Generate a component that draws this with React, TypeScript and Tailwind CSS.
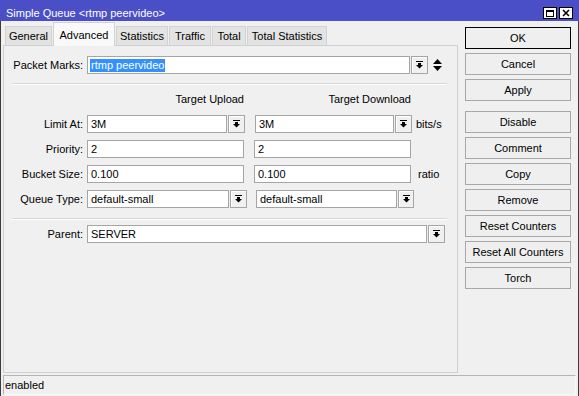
import React from "react";

const font = "font-['Liberation_Sans',Arial,sans-serif]";

function DropArrow() {
  return (
    <svg width="7" height="8" viewBox="0 0 7 8" className="block">
      <rect x="0" y="0" width="7" height="1" fill="#000" />
      <rect x="2" y="2" width="3" height="2" fill="#000" />
      <polygon points="0,4 7,4 3.5,7.5" fill="#000" />
    </svg>
  );
}

function DropButton({ w = "w-[17px]" }: { w?: string }) {
  return (
    <div
      className={`${w} h-[18px] shrink-0 border border-[#a5a5a5] bg-[#f0f0f0] shadow-[inset_1px_1px_0_#fff] flex items-center justify-center`}
    >
      <DropArrow />
    </div>
  );
}

function Field({ w, value, selected }: { w: string; value: string; selected?: boolean }) {
  return (
    <div className={`${w} h-[18px] shrink-0 border border-[#a5a5a5] bg-white flex items-center pl-[2px] overflow-hidden`}>
      {selected ? (
        <span className="bg-[#3390ff] text-white leading-[13px] px-px">{value}</span>
      ) : (
        <span className="pl-px leading-[13px]">{value}</span>
      )}
    </div>
  );
}

function Label({ children }: { children: React.ReactNode }) {
  return <div className="w-[79px] mr-[4px] shrink-0 text-right">{children}</div>;
}

const tabs = [
  { name: "General", w: "w-[47px]" },
  { name: "Advanced", w: "w-[62px]", active: true },
  { name: "Statistics", w: "w-[52px]" },
  { name: "Traffic", w: "w-[42px]" },
  { name: "Total", w: "w-[34px]" },
  { name: "Total Statistics", w: "w-[80px]" },
];

const buttons = [
  { name: "OK", primary: true },
  { name: "Cancel" },
  { name: "Apply", gapAfter: true },
  { name: "Disable" },
  { name: "Comment" },
  { name: "Copy" },
  { name: "Remove" },
  { name: "Reset Counters" },
  { name: "Reset All Counters" },
  { name: "Torch" },
];

export default function App() {
  return (
    <div className={`${font} w-[579px] h-[396px] bg-[#f0f0f0] text-[11px] text-black flex flex-col overflow-hidden`}>
      {/* title bar */}
      <div className="h-[21px] shrink-0 bg-[#4b4fc7] flex items-center justify-between pt-[5px] pl-[6px] pr-[6px] text-white text-[11px]">
        <span>Simple Queue &lt;rtmp peervideo&gt;</span>
        <div className="flex gap-[2px]">
          <div className="w-[14px] h-[12px] bg-white border border-black flex items-center justify-center">
            <div className="w-[8px] h-[7px] border border-black border-t-2" />
          </div>
          <div className="w-[14px] h-[12px] bg-white border border-black flex items-center justify-center">
            <svg width="8" height="8" viewBox="0 0 8 8">
              <path d="M1 1L7 7M7 1L1 7" stroke="#000" strokeWidth="1.6" />
            </svg>
          </div>
        </div>
      </div>

      <div className="flex-1 flex flex-col border-x border-[#3c3c3c]">
        <div className="h-[353px] flex">
          {/* left column: tabs + panel */}
          <div className="ml-[2px] w-[455px] flex flex-col">
            <div className="h-[24px] flex items-end gap-[1px] pl-[2px]">
              {tabs.map((t) =>
                t.active ? (
                  <div
                    key={t.name}
                    className={`${t.w} h-[24px] -mb-px relative z-10 bg-[#f9f9f9] border border-b-0 border-[#d2d2d2] flex items-center justify-center pt-[1px]`}
                  >
                    {t.name}
                  </div>
                ) : (
                  <div
                    key={t.name}
                    className={`${t.w} h-[19px] bg-[#e3e3e3] border border-b-0 border-[#d2d2d2] flex items-center justify-center pt-[1px]`}
                  >
                    {t.name}
                  </div>
                )
              )}
            </div>

            <div className="h-[328px] border border-[#cfcfcf] bg-[#f0f0f0] pt-[10px] flex flex-col">
              <div className="flex items-center">
                <Label>Packet Marks:</Label>
                <Field w="w-[323px]" value="rtmp peervideo" selected />
                <div className="ml-px">
                  <DropButton />
                </div>
                <svg width="9" height="13" viewBox="0 0 9 13" className="ml-[5px]">
                  <polygon points="4.5,0 9,5 0,5" fill="#000" />
                  <polygon points="0,7 9,7 4.5,12" fill="#000" />
                </svg>
              </div>

              <div className="mt-[9px] ml-[8px] w-[435px] h-px bg-[#d8d8d8] shadow-[0_1px_0_#fff]" />

              <div className="mt-[9px] flex h-[13px] items-center">
                <div className="w-[83px] shrink-0" />
                <div className="w-[157px] text-right">Target Upload</div>
                <div className="w-[157px] ml-[10px] text-right">Target Download</div>
              </div>

              <div className="mt-[9px] flex flex-col gap-[7px]">
                <div className="flex items-center">
                  <Label>Limit At:</Label>
                  <Field w="w-[140px]" value="3M" />
                  <div className="ml-px">
                    <DropButton />
                  </div>
                  <div className="ml-[10px]">
                    <Field w="w-[139px]" value="3M" />
                  </div>
                  <div className="ml-px">
                    <DropButton />
                  </div>
                  <span className="ml-[4px]">bits/s</span>
                </div>
                <div className="flex items-center">
                  <Label>Priority:</Label>
                  <Field w="w-[157px]" value="2" />
                  <div className="ml-[10px]">
                    <Field w="w-[157px]" value="2" />
                  </div>
                </div>
                <div className="flex items-center">
                  <Label>Bucket Size:</Label>
                  <Field w="w-[157px]" value="0.100" />
                  <div className="ml-[10px]">
                    <Field w="w-[157px]" value="0.100" />
                  </div>
                  <span className="ml-[7px]">ratio</span>
                </div>
                <div className="flex items-center">
                  <Label>Queue Type:</Label>
                  <Field w="w-[142px]" value="default-small" />
                  <div className="ml-px">
                    <DropButton />
                  </div>
                  <div className="ml-[9px]">
                    <Field w="w-[141px]" value="default-small" />
                  </div>
                  <div className="ml-px">
                    <DropButton w="w-[16px]" />
                  </div>
                </div>
              </div>

              <div className="mt-[10px] ml-[8px] w-[435px] h-px bg-[#d8d8d8] shadow-[0_1px_0_#fff]" />

              <div className="mt-[6px] flex items-center">
                <Label>Parent:</Label>
                <Field w="w-[340px]" value="SERVER" />
                <div className="ml-px">
                  <DropButton />
                </div>
              </div>
            </div>
          </div>

          {/* right column: buttons */}
          <div className="ml-[7px] pt-[6px] w-[106px] flex flex-col">
            {buttons.map((b) => (
              <div
                key={b.name}
                className={`h-[22px] flex items-center justify-center bg-[#efefef] border ${
                  b.primary ? "border-black" : "border-[#a8a8a8]"
                } ${b.gapAfter ? "mb-[10px]" : "mb-[4px]"}`}
              >
                {b.name}
              </div>
            ))}
          </div>
        </div>

        {/* status bar */}
        <div className="h-[22px] px-[2px] pt-px">
          <div className="h-[20px] border border-[#b5b5b5] border-b-[#f8f8f8] border-r-[#f8f8f8] flex items-center pl-px">
            enabled
          </div>
        </div>
      </div>
    </div>
  );
}
